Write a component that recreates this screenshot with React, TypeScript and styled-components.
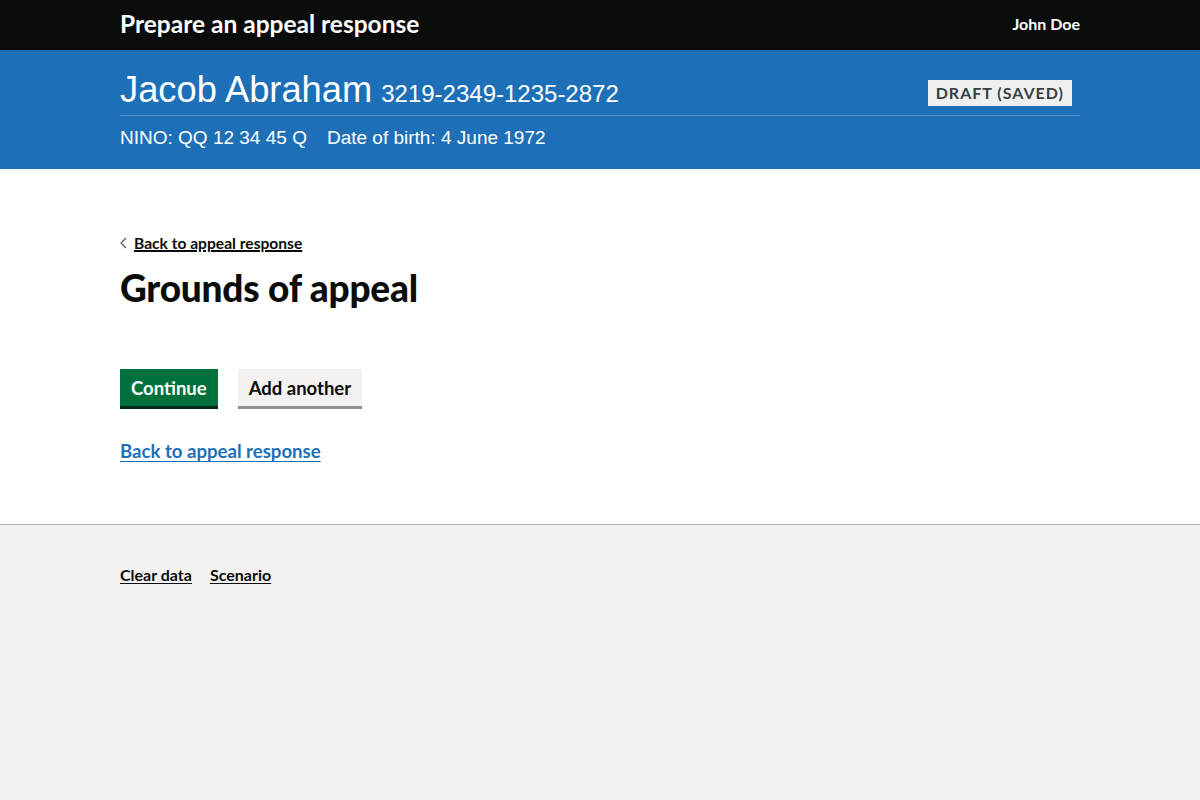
import styled, { createGlobalStyle } from "styled-components";

const GlobalStyle = createGlobalStyle`
  html, body {
    margin: 0;
    padding: 0;
    background: #f3f2f1;
  }
  body {
    font-family: Lato, "Liberation Sans", Arial, sans-serif;
    color: #0b0c0c;
  }
`;

const Page = styled.div`
  min-height: 800px;
  display: flex;
  flex-direction: column;
  background: #f3f2f1;
`;

const Width = styled.div`
  width: 960px;
  margin: 0 auto;
`;

const TopBar = styled.header`
  background: #0b0c0c;
  height: 50px;
`;

const TopInner = styled(Width)`
  height: 100%;
  display: flex;
  align-items: center;
  justify-content: space-between;
  padding-bottom: 4px;
  box-sizing: border-box;
`;

const ServiceName = styled.span`
  color: #fff;
  font-weight: 700;
  font-size: 24.5px;
`;

const UserName = styled.span`
  color: #fff;
  font-weight: 700;
  font-size: 16px;
`;

const Banner = styled.section`
  background: #1d70b8;
  height: 119px;
  color: #fff;
  font-family: "Liberation Sans", Arial, sans-serif;
`;

const BannerInner = styled(Width)`
  padding-top: 20px;
`;

const NameRow = styled.div`
  display: flex;
  align-items: center;
  justify-content: space-between;
  border-bottom: 1px solid #5694ca;
  padding-bottom: 1px;
`;

const Name = styled.h2`
  margin: 0;
  font-weight: 400;
  font-size: 36.3px;
  line-height: 40px;
`;

const Ref = styled.span`
  font-size: 24px;
  margin-left: 9px;
`;

const Tag = styled.strong`
  font-family: Lato, "Liberation Sans", Arial, sans-serif;
  background: #eef0f0;
  color: #383f43;
  font-size: 16px;
  font-weight: 700;
  letter-spacing: 1px;
  padding: 3px 8px 4px 8px;
  margin-right: 8px;
  margin-top: 2px;
  line-height: 19px;
`;

const Details = styled.div`
  display: flex;
  gap: 20px;
  font-size: 19px;
  margin-top: 11px;
`;

const Main = styled.main`
  background: #fff;
  border-bottom: 1px solid #b1b4b6;
`;

const MainInner = styled(Width)`
  padding: 64px 0 62px;
`;

const BackLink = styled.a`
  display: inline-flex;
  align-items: center;
  gap: 7px;
  font-size: 15.6px;
  font-weight: 700;
  color: #0b0c0c;
  svg {
    flex: none;
  }
  span {
    text-decoration: underline;
    text-underline-offset: 2px;
  }
`;

const Heading = styled.h1`
  margin: 16px 0 0;
  font-size: 37px;
  line-height: 40px;
  font-weight: 900;
  letter-spacing: -0.2px;
`;

const ButtonGroup = styled.div`
  display: flex;
  gap: 20px;
  margin-top: 61px;
`;

const Button = styled.button<{ $secondary?: boolean }>`
  font-family: Lato, "Liberation Sans", Arial, sans-serif;
  font-size: 18.5px;
  font-weight: 700;
  border: 0;
  border-radius: 0;
  height: 37px;
  padding: 0 11px;
  background: ${(p) => (p.$secondary ? "#f3f2f1" : "#00703c")};
  color: ${(p) => (p.$secondary ? "#0b0c0c" : "#fff")};
  box-shadow: 0 3px 0 ${(p) => (p.$secondary ? "#929191" : "#002d18")};
`;

const BlueLink = styled.a`
  display: inline-block;
  margin-top: 34px;
  color: #1d70b8;
  font-size: 18.6px;
  font-weight: 700;
  text-decoration: underline;
  text-underline-offset: 3px;
`;

const Footer = styled.footer`
  flex: 1;
  background: #f3f2f1;
`;

const FooterInner = styled(Width)`
  padding-top: 40px;
  display: flex;
  gap: 18px;
`;

const FooterLink = styled.a`
  font-size: 16px;
  font-weight: 700;
  color: #0b0c0c;
  text-decoration: underline;
  text-underline-offset: 2px;
`;

export default function App() {
  return (
    <Page>
      <GlobalStyle />
      <TopBar>
        <TopInner>
          <ServiceName>Prepare an appeal response</ServiceName>
          <UserName>John Doe</UserName>
        </TopInner>
      </TopBar>
      <Banner>
        <BannerInner>
          <NameRow>
            <Name>
              Jacob Abraham<Ref>3219-2349-1235-2872</Ref>
            </Name>
            <Tag>DRAFT (SAVED)</Tag>
          </NameRow>
          <Details>
            <span>NINO: QQ 12 34 45 Q</span>
            <span>Date of birth: 4 June 1972</span>
          </Details>
        </BannerInner>
      </Banner>
      <Main>
        <MainInner>
          <BackLink href="#">
            <svg width="7" height="12" viewBox="0 0 7 12">
              <path d="M6 1 1 6l5 5" fill="none" stroke="#505a5f" strokeWidth="1.2" />
            </svg>
            <span>Back to appeal response</span>
          </BackLink>
          <Heading>Grounds of appeal</Heading>
          <ButtonGroup>
            <Button>Continue</Button>
            <Button $secondary>Add another</Button>
          </ButtonGroup>
          <BlueLink href="#">Back to appeal response</BlueLink>
        </MainInner>
      </Main>
      <Footer>
        <FooterInner>
          <FooterLink href="#">Clear data</FooterLink>
          <FooterLink href="#">Scenario</FooterLink>
        </FooterInner>
      </Footer>
    </Page>
  );
}
